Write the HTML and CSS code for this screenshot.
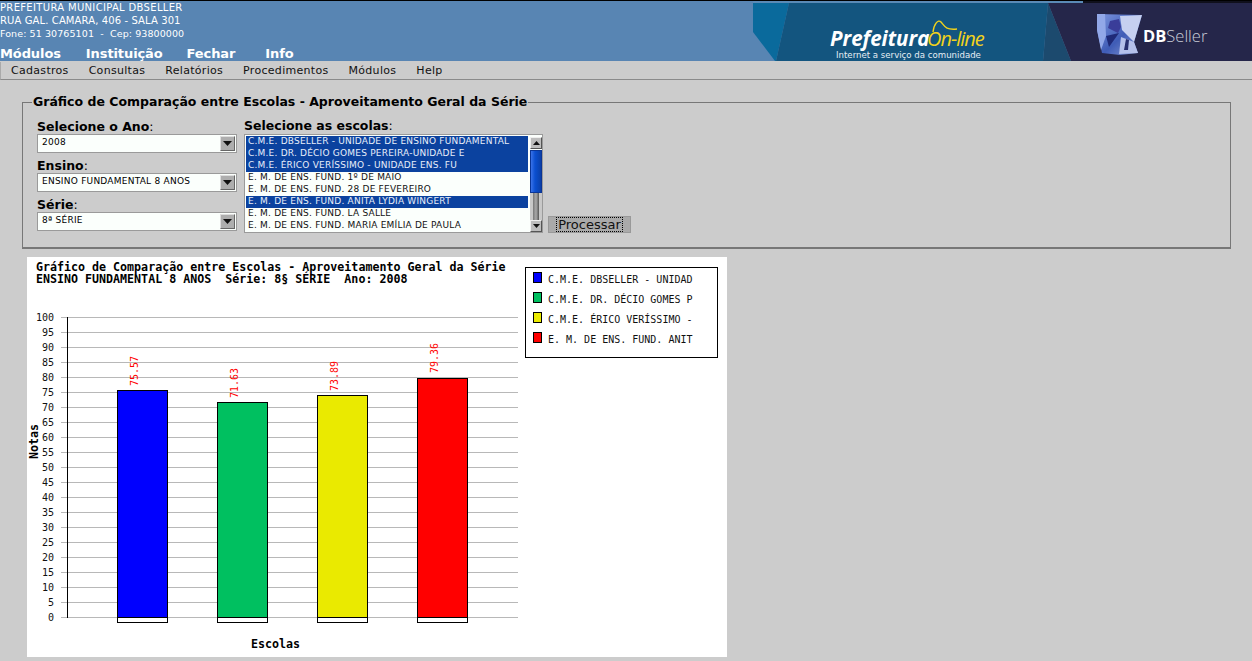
FILE: index.html
```html
<!DOCTYPE html>
<html lang="pt">
<head>
<meta charset="utf-8">
<title>Gráfico de Comparação entre Escolas</title>
<link rel="stylesheet" href="styles.css">
</head>
<body>
<header class="top">
  <div class="top-left">
    <div class="inst">
      <div class="l1">PREFEITURA MUNICIPAL DBSELLER</div>
      <div class="l2">RUA GAL. CAMARA, 406 - SALA 301</div>
      <div class="l3">Fone: 51 30765101 &nbsp;-&nbsp; Cep: 93800000</div>
    </div>
    <nav class="mainnav"><span>Módulos</span><span>Instituição</span><span>Fechar</span><span>Info</span></nav>
  </div>
  <svg class="banner" width="499" height="61" viewBox="0 0 499 61">
    <defs>
      <linearGradient id="cube" x1="0" y1="0" x2="1" y2="1">
        <stop offset="0" stop-color="#7f98e0"/><stop offset=".55" stop-color="#3f5cb6"/><stop offset="1" stop-color="#8e9fd8"/>
      </linearGradient>
    </defs>
    <rect width="499" height="1" fill="#000"/>
    <rect y="1" width="330" height="2" fill="#5a8ab6"/>
    <rect x="330" y="1" width="169" height="2" fill="#10101c"/>
    <polygon points="0,3 36,3 23,61 22,61 0,32" fill="#0a6a9c"/>
    <polygon points="36,3 295,3 290,61 23,61" fill="#13557f"/>
    <polygon points="295,3 318,61 290,61" fill="#1c4a6e"/>
    <polygon points="295,3 499,3 499,61 318,61" fill="#25264a"/>
    <text class="b-pref" x="77" y="46">Prefeitura</text>
    <text class="b-online" x="174" y="46">On-line</text>
    <path class="b-swoosh" d="M180 32c1-8 5-13 8-10 4 5 5 8 16 7"/>
    <text class="b-tag" x="83" y="58">Internet a serviço da comunidade</text>
    <g class="b-logo">
      <polygon points="344,14 389,15 381,42 385,53 367,55 349,53 344,30" fill="url(#cube)"/>
      <polygon points="344,14 352,14 353,36 348,50 344,30" fill="#92a8e8"/>
      <polygon points="367,16 389,15 381,42 369,30" fill="#c6d0f0"/>
      <polygon points="357,21 366,19 368,27 365,33 355,28" fill="#3a3d99"/>
      <polygon points="353,36 366,33 356,47" fill="#1f2a78"/>
      <polygon points="368,37 381,42 385,53 366,54" fill="#b4c0ea"/>
      <polygon points="373,39 376,40 375,50 371,50" fill="#28306f"/>
    </g>
    <text class="b-db" x="390" y="42">DB<tspan class="b-seller">Seller</tspan></text>
  </svg>
</header>
<nav class="menubar"><span>Cadastros</span><span>Consultas</span><span>Relatórios</span><span>Procedimentos</span><span>Módulos</span><span>Help</span></nav>
<main class="content">
  <fieldset class="panel">
    <legend>Gráfico de Comparação entre Escolas - Aproveitamento Geral da Série</legend>
    <div class="form">
      <div class="col-selects">
        <label class="lbl"><b>Selecione o Ano</b>:</label>
        <div class="drop"><span>2008</span><i class="drop-btn"><svg width="9" height="5"><polygon points="0,0 9,0 4.5,5"/></svg></i></div>
        <label class="lbl"><b>Ensino</b>:</label>
        <div class="drop"><span>ENSINO FUNDAMENTAL 8 ANOS</span><i class="drop-btn"><svg width="9" height="5"><polygon points="0,0 9,0 4.5,5"/></svg></i></div>
        <label class="lbl"><b>Série</b>:</label>
        <div class="drop"><span>8ª SÉRIE</span><i class="drop-btn"><svg width="9" height="5"><polygon points="0,0 9,0 4.5,5"/></svg></i></div>
      </div>
      <div class="col-list">
        <label class="lbl lbl-list"><b>Selecione as escolas</b>:</label>
        <div class="listbox">
          <ul class="items">
            <li class="sel">C.M.E. DBSELLER - UNIDADE DE ENSINO FUNDAMENTAL</li>
            <li class="sel">C.M.E. DR. DÉCIO GOMES PEREIRA-UNIDADE E</li>
            <li class="sel">C.M.E. ÉRICO VERÍSSIMO - UNIDADE ENS. FU</li>
            <li>E. M. DE ENS. FUND. 1º DE MAIO</li>
            <li>E. M. DE ENS. FUND. 28 DE FEVEREIRO</li>
            <li class="sel">E. M. DE ENS. FUND. ANITA LYDIA WINGERT</li>
            <li>E. M. DE ENS. FUND. LA SALLE</li>
            <li>E. M. DE ENS. FUND. MARIA EMÍLIA DE PAULA</li>
          </ul>
          <div class="scroll">
            <div class="sb-btn"><svg width="7" height="4"><polygon points="3.5,0 7,4 0,4"/></svg></div>
            <div class="sb-thumb"></div>
            <div class="sb-track"></div>
            <div class="sb-btn"><svg width="7" height="4"><polygon points="0,0 7,0 3.5,4"/></svg></div>
          </div>
        </div>
      </div>
      <button class="go" type="button"><span>Processar</span></button>
    </div>
  </fieldset>
  <svg class="chart" width="700" height="400" viewBox="0 0 700 400">
    <g class="grid">
      <path d="M34 60.500H491M34 75.500H491M34 90.500H491M34 105.500H491M34 120.500H491M34 135.500H491M34 150.500H491M34 165.500H491M34 180.500H491M34 195.500H491M34 210.500H491M34 225.500H491M34 240.500H491M34 255.500H491M34 270.500H491M34 285.500H491M34 300.500H491M34 315.500H491M34 330.500H491M34 345.500H491M34 360.500H491"/>
    </g>
    <line class="axis" x1="40.500" y1="60" x2="40.500" y2="361"/>
    <g class="ylab">
      <text x="27" y="64">100</text><text x="27" y="79">95</text><text x="27" y="94">90</text><text x="27" y="109">85</text><text x="27" y="124">80</text><text x="27" y="139">75</text><text x="27" y="154">70</text><text x="27" y="169">65</text><text x="27" y="184">60</text><text x="27" y="199">55</text><text x="27" y="214">50</text><text x="27" y="229">45</text><text x="27" y="244">40</text><text x="27" y="259">35</text><text x="27" y="274">30</text><text x="27" y="289">25</text><text x="27" y="304">20</text><text x="27" y="319">15</text><text x="27" y="334">10</text><text x="27" y="349">5</text><text x="27" y="364">0</text>
    </g>
    <g class="bars">
      <rect x="90.500" y="133.500" width="50" height="232" fill="#fff"/><rect x="90.500" y="133.500" width="50" height="227" fill="#0000ff"/>
      <rect x="190.500" y="145.500" width="50" height="220" fill="#fff"/><rect x="190.500" y="145.500" width="50" height="215" fill="#00c060"/>
      <rect x="290.500" y="138.500" width="50" height="227" fill="#fff"/><rect x="290.500" y="138.500" width="50" height="222" fill="#eaea00"/>
      <rect x="390.500" y="121.500" width="50" height="244" fill="#fff"/><rect x="390.500" y="121.500" width="50" height="239" fill="#ff0000"/>
    </g>
    <g class="vals">
      <text transform="translate(111 129) rotate(-90)">75.57</text>
      <text transform="translate(211 141) rotate(-90)">71.63</text>
      <text transform="translate(311 134) rotate(-90)">73.89</text>
      <text transform="translate(411 116) rotate(-90)">79.36</text>
    </g>
    <text class="ct" x="9" y="14">Gráfico de Comparação entre Escolas - Aproveitamento Geral da Série</text>
    <text class="ct" x="9" y="26">ENSINO FUNDAMENTAL 8 ANOS  Série: 8§ SÉRIE  Ano: 2008</text>
    <text class="ct" transform="translate(11 202) rotate(-90)">Notas</text>
    <text class="ct" x="224" y="391">Escolas</text>
    <rect class="legend" x="498.500" y="10.500" width="192" height="90"/>
    <rect class="bars-k" x="506.500" y="15.500" width="8" height="10" fill="#0000ff"/>
    <rect class="bars-k" x="506.500" y="35.500" width="8" height="10" fill="#00c060"/>
    <rect class="bars-k" x="506.500" y="55.500" width="8" height="10" fill="#eaea00"/>
    <rect class="bars-k" x="506.500" y="75.500" width="8" height="10" fill="#ff0000"/>
    <g class="lt">
      <text x="521" y="26">C.M.E. DBSELLER - UNIDAD</text>
      <text x="521" y="46">C.M.E. DR. DÉCIO GOMES P</text>
      <text x="521" y="66">C.M.E. ÉRICO VERÍSSIMO -</text>
      <text x="521" y="86">E. M. DE ENS. FUND. ANIT</text>
    </g>
  </svg>
</main>
</body>
</html>
```
FILE: styles.css
```css
* { box-sizing: border-box; }
html, body { margin: 0; height: 100%; overflow: hidden; }
body { background: #cccccc; font-family: "DejaVu Sans", sans-serif; color: #000; }

.top { display: flex; height: 61px; background: #5885b3; border-top: 1px solid #000; }
.top-left { flex: 1; display: flex; flex-direction: column; color: #fff; overflow: hidden; }
.inst { font-size: 10px; line-height: 13px; padding-top: 0; height: 46px; }
.l1 { letter-spacing: .33px; }
.l2 { letter-spacing: .11px; }
.l3 { font-size: 9.500px; letter-spacing: .09px; }
.mainnav { display: flex; gap: 24px; font-size: 13px; font-weight: bold; line-height: 15px; letter-spacing: -.1px; }
.mainnav span:first-child { margin-right: 1px; }
.mainnav span:last-child { margin-left: 6px; }
.banner { display: block; flex: none; margin-top: -1px; }
.b-pref { font: italic bold 20.500px "Open Sans", sans-serif; fill: #fff; }
.b-online { font: italic 20px "Open Sans", sans-serif; fill: #f2d21b; letter-spacing: -1px; }
.b-swoosh { fill: none; stroke: #f2d21b; stroke-width: 1.400; }
.b-tag { font: 8.600px "DejaVu Sans", sans-serif; fill: #e6eef4; }
.b-db { font: bold 16.500px "Open Sans", sans-serif; fill: #fff; }
.b-seller { font-weight: 300; fill: #c9cdd8; }
.b-logo { filter: blur(.6px); }

.menubar { display: flex; gap: 20px; height: 18px; margin-top: 1px; padding-left: 10px; border-bottom: 1px solid #8a8a8a; border-left: 1px solid #aaa; font-size: 11px; line-height: 17px; letter-spacing: .3px; color: #111; }

.content { padding: 15px 21px 0 22px; }
.panel { margin: 0; padding: 0 10px; height: 154px; border: 1px solid #777; border-width: 1px 1px 2px 1px; }
.panel legend { margin-left: -1px; padding: 0 1px; font-size: 12.500px; font-weight: bold; line-height: 14px; }
.form { display: flex; align-items: flex-start; padding: 10px 0 0 4px; }
.col-selects { width: 207px; }
.lbl { display: block; font-size: 12.500px; line-height: 15px; height: 15px; }
.lbl-list { margin-top: -1px; }
.drop { display: flex; justify-content: space-between; width: 200px; height: 19px; margin-bottom: 5px; padding: 1px 1px 1px 4px; border: 1px solid #9a9a9a; background: #fbfffc; font-size: 9px; line-height: 13px; letter-spacing: .24px; }
.drop-btn { display: flex; align-items: center; justify-content: center; width: 15px; background: #aeaeae; border: 1px solid; border-color: #ddd #666 #666 #ddd; }
.drop-btn svg { display: block; fill: #111; }
.col-list { width: 304px; }
.listbox { display: flex; width: 299px; height: 99px; margin-top: 1px; padding: 1px 0 1px 1px; border: 1px solid #9a9a9a; background: #fbfffc; }
.items { flex: 1; margin: 0; padding: 0; list-style: none; font-size: 9px; line-height: 11px; letter-spacing: .21px; white-space: nowrap; overflow: hidden; }
.items li { height: 12px; padding-left: 2px; color: #111; }
.items li.sel { background: #0b429f; color: #e8eefa; }
.scroll { display: flex; flex-direction: column; width: 12px; height: 95px; margin: 1px 0 0 2px; }
.sb-btn { display: flex; align-items: center; justify-content: center; width: 12px; height: 12px; background: #bdbdbd; border: 1px solid; border-color: #eee #555 #555 #eee; }
.sb-btn svg { display: block; fill: #111; }
.sb-thumb { width: 12px; height: 43px; margin-top: 1px; background: linear-gradient(90deg, #3a72e8, #0b4fd0 40%, #0a3fa8); border: 1px solid #0a3596; }
.sb-track { flex: 1; width: 12px; background: linear-gradient(90deg, #c8c8c8 3px, #777 3px, #aaa 6px, #555 9px, #c8c8c8 9px); }
.go { align-self: flex-start; display: flex; justify-content: center; width: 83px; height: 17px; margin-top: 97px; padding: 0; border: 1px solid #999; background: #aaaaaa; font: 13px/15px "DejaVu Sans", sans-serif; color: #111; }
.go span { display: block; height: 15px; padding: 0 1px; border: 1px dotted #000; line-height: 14px; }

.chart { display: block; margin: 8px 0 0 5px; background: #fff; }
.grid path { stroke: #b8b8b8; stroke-width: 1; fill: none; }
.axis { stroke: #000; stroke-width: 1; }
.ylab text { font: 10px "DejaVu Sans Mono", monospace; text-anchor: end; fill: #111; }
.bars rect { stroke: #000; stroke-width: 1; }
.bars-k { stroke: #000; stroke-width: 1; }
.vals text { font: 10px "DejaVu Sans Mono", monospace; fill: #ff0000; }
.ct { font: bold 11.650px "DejaVu Sans Mono", monospace; fill: #000; white-space: pre; }
.legend { fill: #fff; stroke: #000; stroke-width: 1; }
.lt text { font: 10px "DejaVu Sans Mono", monospace; fill: #111; }
```
